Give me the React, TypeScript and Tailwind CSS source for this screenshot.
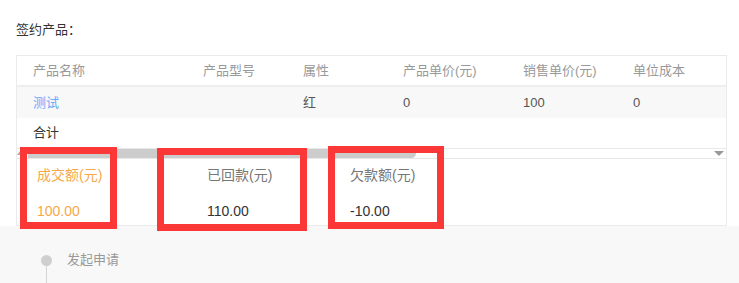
import React from "react";

const columns = [
  { key: "name", label: "产品名称", width: "w-[170px]" },
  { key: "model", label: "产品型号", width: "w-[100px]" },
  { key: "attr", label: "属性", width: "w-[100px]" },
  { key: "price", label: "产品单价(元)", width: "w-[120px]" },
  { key: "sale", label: "销售单价(元)", width: "w-[110px]" },
  { key: "cost", label: "单位成本", width: "flex-1" },
];

const row: Record<string, string> = {
  name: "测试",
  model: "",
  attr: "红",
  price: "0",
  sale: "100",
  cost: "0",
};

const summary = [
  { label: "成交额(元)", value: "100.00", width: "w-[170px]", highlight: true },
  { label: "已回款(元)", value: "110.00", width: "w-[143px]", highlight: false },
  { label: "欠款额(元)", value: "-10.00", width: "w-[150px]", highlight: false },
];

export default function App() {
  return (
    <div
      className="w-full h-[283px] bg-[#f8f8f8] overflow-hidden"
      style={{ fontFamily: '"Liberation Sans", "Noto Sans CJK SC", sans-serif' }}
    >
      {/* Contract products */}
      <div className="relative bg-white px-4 pt-[21px] h-[226px]">
        <div className="text-[13px] leading-[18px] text-[#333]">签约产品：</div>

        <div className="mt-[16px] w-[711px] border border-[#ebebeb]">
          {/* header */}
          <div className="flex h-[31px] items-center border-b-2 border-[#eee] text-[13px] text-[#999]">
            {columns.map((c) => (
              <div key={c.key} className={`${c.width} pl-4`}>
                {c.label}
              </div>
            ))}
          </div>
          {/* body */}
          <div className="flex h-[31px] items-center bg-[#f8f8f8] text-[13px] text-[#555]">
            {columns.map((c) => (
              <div
                key={c.key}
                className={`${c.width} pl-4 ${c.key === "name" ? "text-[#68a9f8]" : ""}`}
              >
                {row[c.key]}
              </div>
            ))}
          </div>
          <div className="flex h-[30px] items-center pl-4 text-[13px] text-[#333]">合计</div>

          {/* horizontal scrollbar */}
          <div className="relative h-[11px] border-y border-[#e8e8e8]">
            <div className="absolute left-[11px] top-0 h-[9px] w-[388px] rounded-r-full bg-[#cccccc]" />
            <div className="absolute left-0 top-[2px] h-0 w-0 border-x-[3px] border-b-[4px] border-x-transparent border-b-[#aaa]" />
            <div className="absolute right-[2px] top-[2px] h-0 w-0 border-x-[5px] border-t-[5px] border-x-transparent border-t-[#999]" />
          </div>

          {/* summary */}
          <div className="flex h-[66px] pl-[20px] pt-[6px]">
            {summary.map((s) => (
              <div key={s.label} className={s.width}>
                <div
                  className={`text-[14px] leading-[20px] ${s.highlight ? "text-[#f6a94a]" : "text-[#777]"}`}
                >
                  {s.label}
                </div>
                <div
                  className={`mt-[16px] text-[14px] leading-[20px] ${s.highlight ? "text-[#f6a94a]" : "text-[#333]"}`}
                >
                  {s.value}
                </div>
              </div>
            ))}
          </div>
        </div>

        {/* annotation boxes */}
        <div className="absolute left-[20px] top-[147px] h-[82px] w-[97px] border-[7px] border-[#fb3737]" />
        <div className="absolute left-[157px] top-[148px] h-[83px] w-[150px] border-[7px] border-[#fb3737]" />
        <div className="absolute left-[328px] top-[146px] h-[83px] w-[116px] border-[7px] border-[#fb3737]" />
      </div>

      {/* Timeline */}
      <div className="flex pl-[41px] pt-[29px]">
        <div className="flex flex-col items-center">
          <div className="h-[11px] w-[11px] rounded-full bg-[#cfcfcf]" />
          <div className="h-[20px] w-px bg-[#d6d6d6]" />
        </div>
        <div className="ml-[15px] -mt-[4px] text-[13px] leading-[18px] text-[#999]">发起申请</div>
      </div>
    </div>
  );
}
